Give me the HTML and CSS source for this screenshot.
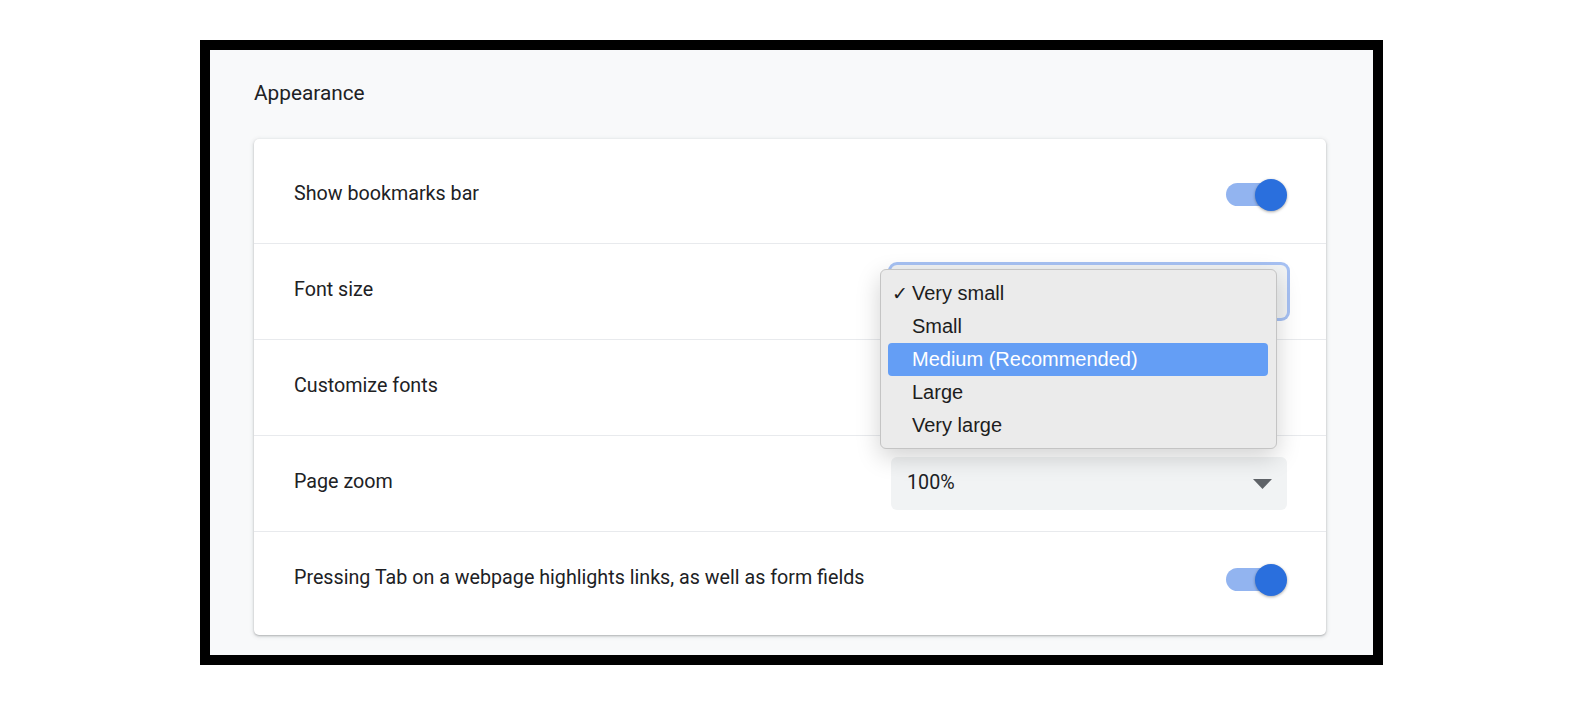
FILE: index.html
```html
<!DOCTYPE html>
<html>
<meta name="viewport" content="width=device-width, initial-scale=1.0">

<head>
    <link rel="stylesheet" href="styles.css">
</head>

<body>
    <div class="frame">
        <h2 class="section-title">Appearance</h2>

        <div class="card">
            <div class="row">
                <span class="label">Show bookmarks bar</span>
                <span class="toggle"><span class="track"></span><span class="knob"></span></span>
            </div>

            <div class="row">
                <span class="label">Font size</span>
                <div class="select-wrap">
                    <div class="select focused"></div>
                    <ul class="popup">
                        <li class="checked">Very small</li>
                        <li>Small</li>
                        <li class="hover">Medium (Recommended)</li>
                        <li>Large</li>
                        <li>Very large</li>
                    </ul>
                </div>
            </div>

            <div class="row">
                <span class="label">Customize fonts</span>
            </div>

            <div class="row">
                <span class="label">Page zoom</span>
                <div class="select">
                    <span class="value">100%</span>
                    <svg class="arrow" width="19" height="10" viewBox="0 0 19 10">
                        <path d="M0 0 L19 0 L9.5 10 Z" fill="#5f6368" />
                    </svg>
                </div>
            </div>

            <div class="row">
                <span class="label">Pressing Tab on a webpage highlights links, as well as form fields</span>
                <span class="toggle"><span class="track"></span><span class="knob"></span></span>
            </div>
        </div>
    </div>
</body>

</html>
```

FILE: styles.css
```css
body {
    margin: 0;
    background-color: #fff;
    font-family: Roboto, "Liberation Sans", sans-serif;
    color: #202124;
}

.frame {
    box-sizing: border-box;
    width: 1183px;
    height: 625px;
    margin: 40px 0 0 200px;
    border: 10px solid #000;
    background-color: #f8f9fa;
    padding: 31px 0 0 44px;
}

.section-title {
    margin: 0 0 34px 0;
    font-size: 20.8px;
    line-height: 24px;
    font-weight: normal;
}

.card {
    width: 1072px;
    padding: 8px 0;
    background-color: #fff;
    border-radius: 5px;
    box-shadow: 0 1px 2px rgba(60, 64, 67, 0.3), 0 1px 4px 1px rgba(60, 64, 67, 0.12);
}

.row {
    box-sizing: border-box;
    height: 96px;
    padding: 0 39px 0 40px;
    display: flex;
    align-items: center;
    justify-content: space-between;
    border-top: 1px solid #e8eaed;
}

.row:first-child {
    border-top: none;
}

.label {
    font-size: 19.7px;
    padding-bottom: 4px;
}

/* toggles */
.toggle {
    position: relative;
    width: 61px;
    height: 32px;
}

.track {
    position: absolute;
    left: 0;
    top: 4px;
    width: 56px;
    height: 23px;
    border-radius: 12px;
    background-color: #92b4f0;
}

.knob {
    position: absolute;
    right: 0;
    top: 0;
    width: 32px;
    height: 32px;
    border-radius: 50%;
    background-color: #2a6fdd;
    box-shadow: 0 1px 3px rgba(0, 0, 0, 0.35);
}

/* selects */
.select-wrap {
    position: relative;
}

.select {
    box-sizing: border-box;
    width: 396px;
    height: 53px;
    padding: 0 15px 0 16px;
    display: flex;
    align-items: center;
    justify-content: space-between;
    background-color: #f1f3f4;
    border-radius: 6px;
    font-size: 19.7px;
}

.select .value {
    padding-bottom: 3px;
}

.select.focused {
    box-shadow: 0 0 0 3px #a6c1f3;
}

.popup {
    position: absolute;
    left: -11px;
    top: 4px;
    box-sizing: border-box;
    width: 397px;
    margin: 0;
    padding: 7px 8px 6px 7px;
    list-style: none;
    background-color: #ebebeb;
    border: 1px solid #c4c4c4;
    border-radius: 6px;
    box-shadow: 0 8px 24px rgba(0, 0, 0, 0.18);
    font-family: "Liberation Sans", Arial, sans-serif;
    font-size: 20px;
    color: #1d1d1d;
}

.popup li {
    position: relative;
    height: 33px;
    line-height: 32px;
    padding-left: 24px;
    border-radius: 4px;
}

.popup li.checked::before {
    content: "\2713";
    position: absolute;
    left: 4px;
    font-family: "DejaVu Sans", sans-serif;
    font-size: 19px;
    font-weight: bold;
}

.popup li.hover {
    background-color: #649ef5;
    color: #fff;
}
```
